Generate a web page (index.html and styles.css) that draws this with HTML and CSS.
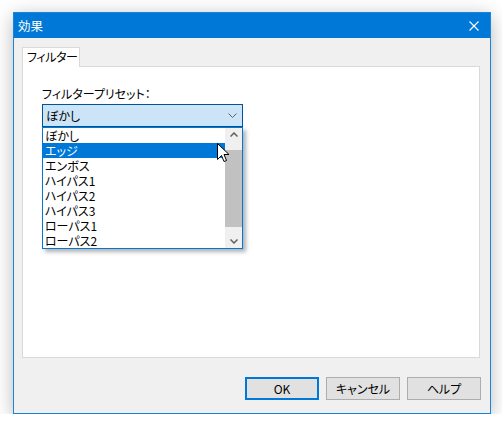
FILE: index.html
```html
<!DOCTYPE html>
<html lang="ja">
<head>
<meta charset="utf-8">
<title>効果</title>
<link rel="stylesheet" href="styles.css">
</head>
<body>
<div class="window">
  <div class="titlebar">
    <span class="title">効果</span>
    <svg class="close" width="10" height="10" viewBox="0 0 10 10"><path d="M0.5 0.5 L9.5 9.5 M9.5 0.5 L0.5 9.5" stroke="#fff" stroke-width="1.1" fill="none"/></svg>
  </div>
  <div class="content">
    <div class="tabs">
      <div class="tab">フィルター</div>
    </div>
    <div class="panel">
      <div class="label">フィルタープリセット：</div>
      <div class="combo-wrap">
        <div class="combo">
          <span>ぼかし</span>
          <svg class="chev" width="9" height="5" viewBox="0 0 9 5"><path d="M0.5 0.5 L4.5 4.5 L8.5 0.5" stroke="#606060" stroke-width="1" fill="none"/></svg>
        </div>
        <div class="dropdown">
          <ul class="items">
            <li>ぼかし</li>
            <li class="sel">エッジ</li>
            <li>エンボス</li>
            <li>ハイパス1</li>
            <li>ハイパス2</li>
            <li>ハイパス3</li>
            <li>ローパス1</li>
            <li>ローパス2</li>
          </ul>
          <div class="scrollbar">
            <div class="arrow up"><svg width="8" height="5" viewBox="0 0 8 5"><path d="M0.5 4.5 L4 1 L7.5 4.5" stroke="#606060" stroke-width="1.5" fill="none"/></svg></div>
            <div class="track"><div class="thumb"></div></div>
            <div class="arrow down"><svg width="8" height="5" viewBox="0 0 8 5"><path d="M0.5 0.5 L4 4 L7.5 0.5" stroke="#606060" stroke-width="1.5" fill="none"/></svg></div>
          </div>
          <svg class="cursor" width="13" height="20" viewBox="0 0 13 20"><path d="M0.5 0.5 L0.5 16.5 L4.5 12.5 L7 18.5 L9.5 17.5 L7 11.5 L12 11.5 Z" fill="#fff" stroke="#000" stroke-width="1" stroke-linejoin="miter"/></svg>
        </div>
      </div>
    </div>
    <div class="buttons">
      <button class="btn default">OK</button>
      <button class="btn">キャンセル</button>
      <button class="btn">ヘルプ</button>
    </div>
  </div>
</div>
</body>
</html>
```
FILE: styles.css
```css
* { box-sizing: border-box; }
html, body { margin: 0; padding: 0; background: #ffffff; }
body {
  font-family: "Noto Sans CJK JP", "Noto Sans", sans-serif;
  font-size: 12px;
  font-feature-settings: "palt";
  color: #000;
}
.window {
  margin: 12px 0 0 13px;
  width: 478px;
  height: 402px;
  border: 1px solid #1a84d9;
  background: #f0f0f0;
  box-shadow: 0 4px 18px rgba(0,0,0,0.28);
  display: flex;
  flex-direction: column;
}
.titlebar {
  height: 25px;
  background: #0078d7;
  color: #fff;
  display: flex;
  align-items: center;
  justify-content: space-between;
  padding: 0 10px 0 4px;
}
.title { font-size: 12.5px; line-height: 25px; }
.close { display: block; margin-right: 1px; }
.content {
  flex: 1;
  padding: 9px 10px 0 8px;
  display: flex;
  flex-direction: column;
}
.tabs { display: flex; height: 19px; position: relative; z-index: 1; }
.tab {
  width: 58px;
  height: 20px;
  background: #fff;
  border: 1px solid #d9d9d9;
  border-bottom: none;
  line-height: 18px;
  padding-left: 4px;
  font-size: 12px;
  white-space: nowrap;
  letter-spacing: -0.4px;
  overflow: hidden;
}
.panel {
  height: 292px;
  background: #fff;
  border: 1px solid #d9d9d9;
  padding: 19px 0 0 19px;
}
.label { height: 18px; line-height: 16px; }
.combo-wrap { position: relative; width: 201px; }
.combo {
  height: 23px;
  background: #cce4f7;
  border: 1px solid #005499;
  display: flex;
  align-items: center;
  justify-content: space-between;
  padding: 0 5px 0 3px;
}
.combo span { line-height: 20px; }
.chev { display: block; }
.dropdown {
  position: absolute;
  left: 0;
  top: 23px;
  width: 201px;
  height: 122px;
  background: #fff;
  border: 1px solid #0078d7;
  box-shadow: 3px 3px 4px rgba(0,0,0,0.3);
  display: flex;
}
.items { list-style: none; margin: 0; padding: 0; flex: 1; }
.items li { height: 15px; line-height: 15px; padding-left: 2px; white-space: nowrap; overflow: hidden; }
.items li.sel { background: #0078d7; color: #fff; }
.scrollbar {
  width: 17px;
  background: #f0f0f0;
  display: flex;
  flex-direction: column;
}
.arrow { height: 17px; display: flex; align-items: center; justify-content: center; }
.arrow svg { display: block; }
.arrow.up { height: 12px; padding-top: 3px; }
.track { flex: 1; padding: 12px 0 8px 0; }
.thumb { height: 77px; background: #c1c1c1; }
.cursor { position: absolute; left: 174px; top: 15px; }
.buttons {
  display: flex;
  justify-content: flex-end;
  gap: 7px;
  padding: 19px 0 0 0;
  margin-right: -1px;
}
.btn {
  width: 74px;
  height: 23px;
  background: #e1e1e1;
  border: 1px solid #adadad;
  font-family: "Noto Sans CJK JP", "Noto Sans", sans-serif;
  font-feature-settings: "palt";
  font-size: 12px;
  color: #000;
  padding: 0;
  line-height: 19px;
}
.btn.default { border: 2px solid #0078d7; }
```
